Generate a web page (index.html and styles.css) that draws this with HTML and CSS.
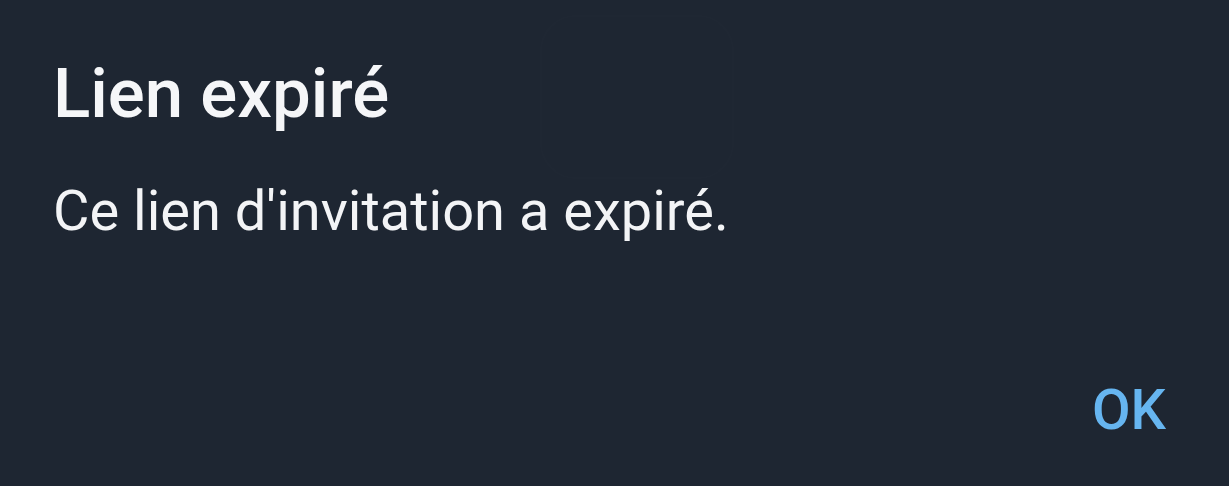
FILE: index.html
```html
<!DOCTYPE html>
<html lang="fr">
<head>
<meta charset="utf-8">
<link rel="stylesheet" href="styles.css">
</head>
<body>
<div class="dialog">
  <div class="ghost"></div>
  <h1 class="title">Lien expiré</h1>
  <p class="message">Ce lien d'invitation a expiré.</p>
  <div class="actions">
    <button class="btn">OK</button>
  </div>
</div>
</body>
</html>
```
FILE: styles.css
```css
html, body {
  margin: 0;
  padding: 0;
  width: 1229px;
  height: 486px;
  background: #1e2632;
  overflow: hidden;
}
.dialog {
  position: relative;
  box-sizing: border-box;
  width: 1229px;
  height: 486px;
  padding: 0 63px 0 53px;
  display: flex;
  flex-direction: column;
  font-family: Roboto, "Noto Sans", sans-serif;
}
.ghost {
  position: absolute;
  left: 540px;
  top: 15px;
  width: 190px;
  height: 160px;
  border-radius: 36px;
  border: 2px solid rgba(255,255,255,0.008);
  background: rgba(255,255,255,0.003);
}
.title {
  margin: 56px 0 0;
  font-size: 69px;
  font-weight: 500;
  line-height: 76px;
  color: #f5f6f8;
}
.message {
  margin: 47px 0 0;
  font-size: 56px;
  font-weight: 400;
  line-height: 64px;
  color: #f3f4f6;
}
.actions {
  margin-top: auto;
  margin-bottom: 44px;
  display: flex;
  justify-content: flex-end;
}
.btn {
  background: none;
  border: 0;
  padding: 0;
  font-family: Roboto, "Noto Sans", sans-serif;
  font-size: 56px;
  font-weight: 500;
  line-height: 64px;
  color: #66b5f0;
}
```
